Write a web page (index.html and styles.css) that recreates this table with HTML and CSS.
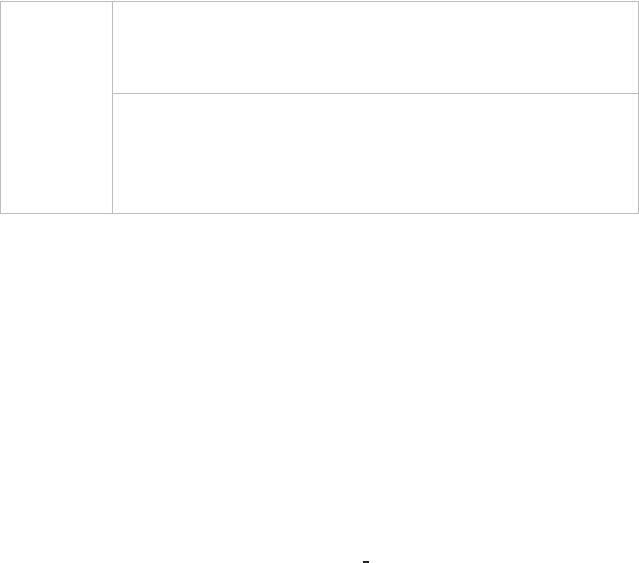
FILE: index.html
```html
<!DOCTYPE html>
<html>
<head>
<meta charset="utf-8">
<link rel="stylesheet" href="styles.css">
</head>
<body>
<div class="grid">
  <div class="side"><div class="inner"></div></div>
  <div class="main">
    <div class="row top"><div class="inner"></div></div>
    <div class="row bottom"><div class="inner"></div></div>
  </div>
</div>
<div class="foot"><span class="mark"></span></div>
</body>
</html>
```
FILE: styles.css
```css
html, body {
  margin: 0;
  padding: 0;
  background: #fff;
  font-family: "Liberation Sans", Arial, sans-serif;
}
body {
  width: 639px;
  height: 563px;
  overflow: hidden;
  display: flex;
  flex-direction: column;
}
.grid {
  margin-top: 1px;
  width: 639px;
  height: 213px;
  box-sizing: border-box;
  border: 1px solid #bdbdbd;
  display: flex;
}
.side {
  width: 112px;
  box-sizing: border-box;
  border-right: 1px solid #bdbdbd;
  padding: 0 5px 4px 5px;
  display: flex;
}
.main {
  flex: 1;
  display: flex;
  flex-direction: column;
}
.row {
  display: flex;
  box-sizing: border-box;
  padding: 0 5px 4px 5px;
}
.row.top {
  height: 92px;
  border-bottom: 1px solid #bdbdbd;
}
.row.bottom {
  flex: 1;
}
.inner {
  flex: 1;
  border-left: 1px solid #fbfbfb;
  border-right: 1px solid #fbfbfb;
}
.foot {
  flex: 1;
  position: relative;
}
.mark {
  position: absolute;
  left: 363px;
  bottom: 0;
  width: 6px;
  height: 2px;
  background: #222;
}
```
